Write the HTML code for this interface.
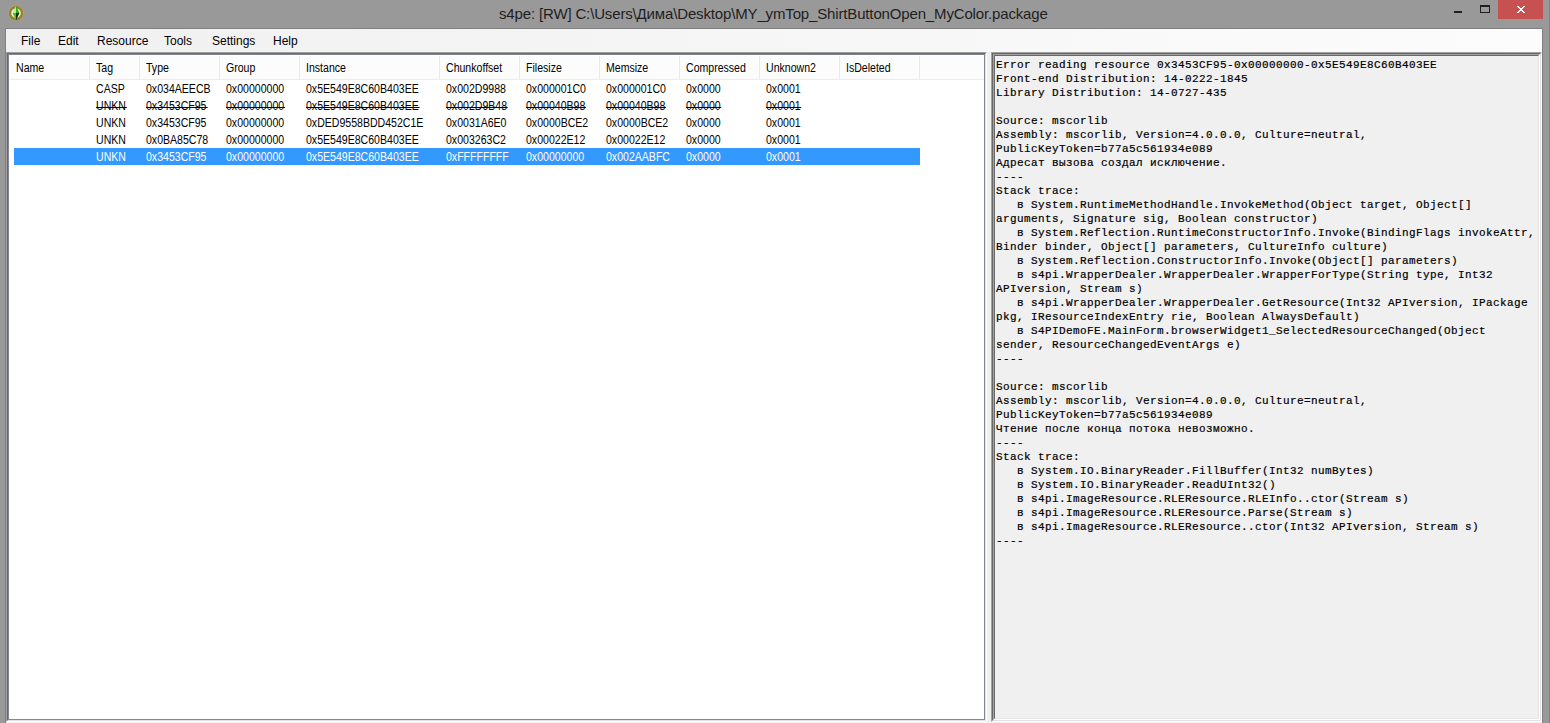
<!DOCTYPE html>
<html><head><meta charset="utf-8">
<style>
html,body{margin:0;padding:0}
body{width:1550px;height:723px;overflow:hidden;background:#999999;position:relative;font-family:"Liberation Sans",sans-serif}
.abs{position:absolute}
#title{position:absolute;left:499px;top:5px;font-size:15px;color:#1e1e1e;white-space:pre;letter-spacing:-0.15px}
#frameline{left:5px;top:28px;width:1538px;height:695px;background:#808080}
#client{left:6px;top:29px;width:1536px;height:694px;background:#f0f0f0}
#menu{left:6px;top:29px;width:1536px;height:23px;background:linear-gradient(to right,#f0f0f0,#fcfcfc)}
.mi{position:absolute;top:5px;font-size:12px;color:#000;white-space:pre}
#lp{left:6px;top:52px;width:981px;height:670px;box-sizing:border-box;border-left:1px solid #a0a0a0;border-top:1px solid #a0a0a0;border-right:1px solid #fff;border-bottom:1px solid #fff}
#lp2{left:7px;top:53px;width:979px;height:668px;box-sizing:border-box;border-left:1px solid #696969;border-top:1px solid #696969;border-right:1px solid #e3e3e3;border-bottom:1px solid #e3e3e3}
#lv{left:8px;top:54px;width:977px;height:666px;box-sizing:border-box;border:1px solid #828790;background:#fff}
#rp{left:991px;top:52px;width:551px;height:670px;box-sizing:border-box;border-left:1px solid #a0a0a0;border-top:1px solid #a0a0a0;border-right:1px solid #fff;border-bottom:1px solid #fff}
#rp2{left:992px;top:53px;width:549px;height:668px;box-sizing:border-box;border-left:1px solid #696969;border-top:1px solid #696969;border-right:1px solid #e3e3e3;border-bottom:1px solid #e3e3e3}
#tb{left:993px;top:54px;width:547px;height:666px;box-sizing:border-box;border-left:1px solid #a0a0a0;border-top:1px solid #a0a0a0;border-right:1px solid #fff;border-bottom:1px solid #fff}
#tb2{left:994px;top:55px;width:545px;height:664px;box-sizing:border-box;border-left:1px solid #696969;border-top:1px solid #696969;border-right:1px solid #e3e3e3;border-bottom:1px solid #e3e3e3;background:#f0f0f0}
#txt{left:996px;top:58px;font-family:"Liberation Mono",monospace;font-size:11px;letter-spacing:0.4px;-webkit-text-stroke:0.2px #000;line-height:14px;white-space:pre;color:#000}
#hdr{left:9px;top:55px;width:975px;height:24px;background:#fcfcfc;border-bottom:1px solid #e5edf8}
.hs{position:absolute;top:1px;width:1px;height:23px;background:#e3ebf6}
.ht{position:absolute;top:6px;font-size:12px;color:#000;white-space:pre;transform:scaleX(0.88);transform-origin:0 0}
.row{position:absolute;left:9px;height:17px;width:975px}
.c{position:absolute;top:2px;font-size:12px;white-space:pre;color:#000;transform:scaleX(0.88);transform-origin:0 0}
.del .c::after{content:"";position:absolute;left:0;right:-1px;top:8px;height:1px;background:#000}
.sel{background:#3399ff;width:906px;left:14px}
.sel .c{color:#fff}
#close{left:1498px;top:0;width:45px;height:19px;background:#c75050}
#rframe{left:1549px;top:0;width:1px;height:723px;background:#808080}
</style></head><body>
<div class="abs" id="rframe"></div>
<svg class="abs" style="left:8px;top:5px" width="16" height="16" viewBox="0 0 16 16">
<circle cx="8" cy="8.2" r="6.1" fill="#ecece0" stroke="#9a8424" stroke-width="2.6"/>
<circle cx="8" cy="8.2" r="7.6" fill="none" stroke="#d8d0b0" stroke-width="0.6" stroke-dasharray="1 1.2" opacity="0.7"/>
<path d="M8 0.8 L4.6 8 L8 8 Z" fill="#b8f090"/>
<path d="M4.6 8 L8 15.6 L8 8 Z" fill="#48c030"/>
<path d="M8 0.8 L11.4 8 L8 8 Z" fill="#30a828"/>
<path d="M11.4 8 L8 15.6 L8 8 Z" fill="#0c3a0c"/>
</svg>
<div id="title">s4pe: [RW] C:\Users\Дима\Desktop\MY_ymTop_ShirtButtonOpen_MyColor.package</div>
<div class="abs" style="left:1454px;top:11px;width:8px;height:2px;background:#1f1f1f"></div>
<div class="abs" style="left:1480px;top:5px;width:10px;height:8px;box-sizing:border-box;border:1px solid #1f1f1f;border-top-width:2px"></div>
<div class="abs" id="close"></div>
<svg class="abs" style="left:1517px;top:6px" width="8" height="7" viewBox="0 0 8 7" fill="#fff" shape-rendering="crispEdges"><rect x="0" y="0" width="2" height="1"/><rect x="6" y="0" width="2" height="1"/><rect x="1" y="1" width="2" height="1"/><rect x="5" y="1" width="2" height="1"/><rect x="2" y="2" width="4" height="1"/><rect x="3" y="3" width="2" height="1"/><rect x="2" y="4" width="4" height="1"/><rect x="1" y="5" width="2" height="1"/><rect x="5" y="5" width="2" height="1"/><rect x="0" y="6" width="2" height="1"/><rect x="6" y="6" width="2" height="1"/></svg>
<div class="abs" id="frameline"></div>
<div class="abs" id="client"></div>
<div class="abs" id="menu">
<span class="mi" style="left:15px">File</span>
<span class="mi" style="left:52px">Edit</span>
<span class="mi" style="left:91px">Resource</span>
<span class="mi" style="left:158px">Tools</span>
<span class="mi" style="left:206px">Settings</span>
<span class="mi" style="left:267px">Help</span>
</div>
<div class="abs" id="lp"></div>
<div class="abs" id="lp2"></div>
<div class="abs" id="lv"></div>
<div class="abs" id="rp"></div>
<div class="abs" id="rp2"></div>
<div class="abs" id="tb"></div>
<div class="abs" id="tb2"></div>
<div class="abs" id="hdr">
<span class="ht" style="left:7px">Name</span><div class="hs" style="left:80px"></div>
<span class="ht" style="left:87px">Tag</span><div class="hs" style="left:130px"></div>
<span class="ht" style="left:137px">Type</span><div class="hs" style="left:210px"></div>
<span class="ht" style="left:217px">Group</span><div class="hs" style="left:290px"></div>
<span class="ht" style="left:297px">Instance</span><div class="hs" style="left:430px"></div>
<span class="ht" style="left:437px">Chunkoffset</span><div class="hs" style="left:510px"></div>
<span class="ht" style="left:517px">Filesize</span><div class="hs" style="left:590px"></div>
<span class="ht" style="left:597px">Memsize</span><div class="hs" style="left:670px"></div>
<span class="ht" style="left:677px">Compressed</span><div class="hs" style="left:750px"></div>
<span class="ht" style="left:757px">Unknown2</span><div class="hs" style="left:830px"></div>
<span class="ht" style="left:837px">IsDeleted</span><div class="hs" style="left:910px"></div>
</div>
<div class="row" style="top:80px"><span class="c" style="left:87px">CASP</span><span class="c" style="left:137px">0x034AEECB</span><span class="c" style="left:217px">0x00000000</span><span class="c" style="left:297px">0x5E549E8C60B403EE</span><span class="c" style="left:437px">0x002D9988</span><span class="c" style="left:517px">0x000001C0</span><span class="c" style="left:597px">0x000001C0</span><span class="c" style="left:677px">0x0000</span><span class="c" style="left:757px">0x0001</span></div>
<div class="row del" style="top:97px"><span class="c" style="left:87px">UNKN</span><span class="c" style="left:137px">0x3453CF95</span><span class="c" style="left:217px">0x00000000</span><span class="c" style="left:297px">0x5E549E8C60B403EE</span><span class="c" style="left:437px">0x002D9B48</span><span class="c" style="left:517px">0x00040B98</span><span class="c" style="left:597px">0x00040B98</span><span class="c" style="left:677px">0x0000</span><span class="c" style="left:757px">0x0001</span></div>
<div class="row" style="top:114px"><span class="c" style="left:87px">UNKN</span><span class="c" style="left:137px">0x3453CF95</span><span class="c" style="left:217px">0x00000000</span><span class="c" style="left:297px">0xDED9558BDD452C1E</span><span class="c" style="left:437px">0x0031A6E0</span><span class="c" style="left:517px">0x0000BCE2</span><span class="c" style="left:597px">0x0000BCE2</span><span class="c" style="left:677px">0x0000</span><span class="c" style="left:757px">0x0001</span></div>
<div class="row" style="top:131px"><span class="c" style="left:87px">UNKN</span><span class="c" style="left:137px">0x0BA85C78</span><span class="c" style="left:217px">0x00000000</span><span class="c" style="left:297px">0x5E549E8C60B403EE</span><span class="c" style="left:437px">0x003263C2</span><span class="c" style="left:517px">0x00022E12</span><span class="c" style="left:597px">0x00022E12</span><span class="c" style="left:677px">0x0000</span><span class="c" style="left:757px">0x0001</span></div>
<div class="row sel" style="top:148px"><span class="c" style="left:82px">UNKN</span><span class="c" style="left:132px">0x3453CF95</span><span class="c" style="left:212px">0x00000000</span><span class="c" style="left:292px">0x5E549E8C60B403EE</span><span class="c" style="left:432px">0xFFFFFFFF</span><span class="c" style="left:512px">0x00000000</span><span class="c" style="left:592px">0x002AABFC</span><span class="c" style="left:672px">0x0000</span><span class="c" style="left:752px">0x0001</span></div>
<div class="abs" id="txt">Error reading resource 0x3453CF95-0x00000000-0x5E549E8C60B403EE
Front-end Distribution: 14-0222-1845
Library Distribution: 14-0727-435

Source: mscorlib
Assembly: mscorlib, Version=4.0.0.0, Culture=neutral,
PublicKeyToken=b77a5c561934e089
Адресат вызова создал исключение.
----
Stack trace:
   в System.RuntimeMethodHandle.InvokeMethod(Object target, Object[]
arguments, Signature sig, Boolean constructor)
   в System.Reflection.RuntimeConstructorInfo.Invoke(BindingFlags invokeAttr,
Binder binder, Object[] parameters, CultureInfo culture)
   в System.Reflection.ConstructorInfo.Invoke(Object[] parameters)
   в s4pi.WrapperDealer.WrapperDealer.WrapperForType(String type, Int32
APIversion, Stream s)
   в s4pi.WrapperDealer.WrapperDealer.GetResource(Int32 APIversion, IPackage
pkg, IResourceIndexEntry rie, Boolean AlwaysDefault)
   в S4PIDemoFE.MainForm.browserWidget1_SelectedResourceChanged(Object
sender, ResourceChangedEventArgs e)
----

Source: mscorlib
Assembly: mscorlib, Version=4.0.0.0, Culture=neutral,
PublicKeyToken=b77a5c561934e089
Чтение после конца потока невозможно.
----
Stack trace:
   в System.IO.BinaryReader.FillBuffer(Int32 numBytes)
   в System.IO.BinaryReader.ReadUInt32()
   в s4pi.ImageResource.RLEResource.RLEInfo..ctor(Stream s)
   в s4pi.ImageResource.RLEResource.Parse(Stream s)
   в s4pi.ImageResource.RLEResource..ctor(Int32 APIversion, Stream s)
----</div>
</body></html>
